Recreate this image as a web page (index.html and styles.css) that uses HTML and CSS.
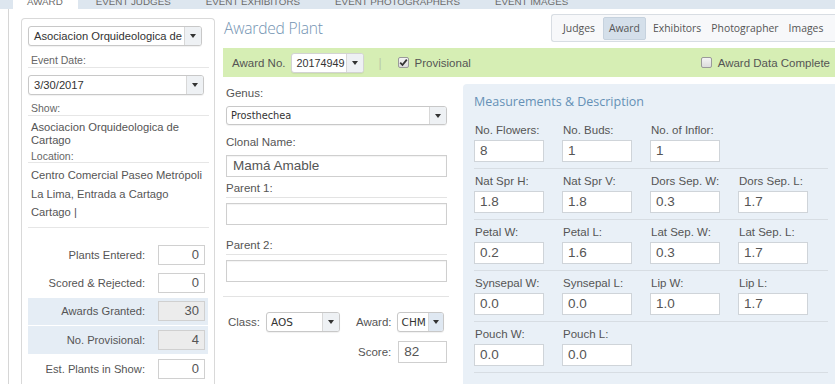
FILE: index.html
```html
<!DOCTYPE html>
<html>
<head>
<meta charset="utf-8">
<link rel="stylesheet" href="styles.css">
</head>
<body>
<div class="topnav">
  <div class="tab active">AWARD</div>
  <div class="tab">EVENT JUDGES</div>
  <div class="tab">EVENT EXHIBITORS</div>
  <div class="tab">EVENT PHOTOGRAPHERS</div>
  <div class="tab">EVENT IMAGES</div>
</div>
<div class="frame">
  <aside class="card">
    <div class="sel sel-show"><span class="val">Asociacion Orquideologica de</span><span class="btn"><i class="tri"></i></span></div>
    <div class="clabel lbl-date">Event Date:</div>
    <div class="sel sel-date"><span class="val">3/30/2017</span><span class="btn"><i class="tri"></i></span></div>
    <div class="clabel lbl-show">Show:</div>
    <div class="showtext">Asociacion Orquideologica de<br>Cartago</div>
    <div class="clabel lbl-loc">Location:</div>
    <div class="loctext">
      <div>Centro Comercial Paseo Metrópoli</div>
      <div>La Lima, Entrada a Cartago</div>
      <div>Cartago |</div>
    </div>
    <div class="divider"></div>
    <div class="stats">
      <div class="srow"><span class="slabel">Plants Entered:</span><span class="sinput">0</span></div>
      <div class="srow"><span class="slabel">Scored &amp; Rejected:</span><span class="sinput">0</span></div>
      <div class="srow hl"><span class="slabel">Awards Granted:</span><span class="sinput ro">30</span></div>
      <div class="srow hl"><span class="slabel">No. Provisional:</span><span class="sinput ro">4</span></div>
      <div class="srow"><span class="slabel">Est. Plants in Show:</span><span class="sinput">0</span></div>
    </div>
  </aside>
  <main class="main">
    <div class="head">
      <h1 class="title">Awarded Plant</h1>
      <nav class="subtabs">
        <span class="stab">Judges</span>
        <span class="stab on">Award</span>
        <span class="stab">Exhibitors</span>
        <span class="stab">Photographer</span>
        <span class="stab">Images</span>
      </nav>
    </div>
    <div class="greenbar">
      <span class="gl">Award No.</span>
      <div class="sel sel-award"><span class="val">20174949</span><span class="btn"><i class="tri"></i></span></div>
      <span class="pipe">|</span>
      <span class="cb checked"><svg width="9" height="9" viewBox="0 0 9 9"><path d="M1.2 4.6 L3.5 7 L7.8 1.6" fill="none" stroke="#333" stroke-width="1.8"/></svg></span>
      <span class="gl">Provisional</span>
      <span class="spacer"></span>
      <span class="cb"></span>
      <span class="gl">Award Data Complete</span>
    </div>
    <div class="body">
      <div class="form">
        <div class="flabel lbl-genus">Genus:</div>
        <div class="sel sel-genus"><span class="val">Prosthechea</span><span class="btn"><i class="tri"></i></span></div>
        <div class="flabel lbl-clonal">Clonal Name:</div>
        <div class="finput big">Mamá Amable</div>
        <div class="flabel uline lbl-p1">Parent 1:</div>
        <div class="finput"></div>
        <div class="flabel uline lbl-p2">Parent 2:</div>
        <div class="finput"></div>
        <div class="fsep"></div>
        <div class="classrow">
          <span class="flab">Class:</span>
          <div class="sel sel-class"><span class="val">AOS</span><span class="btn"><i class="tri"></i></span></div>
          <span class="flab lab-award">Award:</span>
          <div class="sel sel-aw"><span class="val">CHM</span><span class="btn blue"><i class="tri"></i></span></div>
        </div>
        <div class="scorerow">
          <span class="flab">Score:</span>
          <div class="scorebox">82</div>
        </div>
      </div>
      <section class="measure">
        <h2 class="mtitle">Measurements &amp; Description</h2>
        <div class="mrow">
          <div class="cell"><div class="ml">No. Flowers:</div><div class="mi">8</div></div>
          <div class="cell"><div class="ml">No. Buds:</div><div class="mi">1</div></div>
          <div class="cell"><div class="ml">No. of Inflor:</div><div class="mi">1</div></div>
        </div>
        <div class="mrow">
          <div class="cell"><div class="ml">Nat Spr H:</div><div class="mi">1.8</div></div>
          <div class="cell"><div class="ml">Nat Spr V:</div><div class="mi">1.8</div></div>
          <div class="cell"><div class="ml">Dors Sep. W:</div><div class="mi">0.3</div></div>
          <div class="cell"><div class="ml">Dors Sep. L:</div><div class="mi">1.7</div></div>
        </div>
        <div class="mrow">
          <div class="cell"><div class="ml">Petal W:</div><div class="mi">0.2</div></div>
          <div class="cell"><div class="ml">Petal L:</div><div class="mi">1.6</div></div>
          <div class="cell"><div class="ml">Lat Sep. W:</div><div class="mi">0.3</div></div>
          <div class="cell"><div class="ml">Lat Sep. L:</div><div class="mi">1.7</div></div>
        </div>
        <div class="mrow">
          <div class="cell"><div class="ml">Synsepal W:</div><div class="mi">0.0</div></div>
          <div class="cell"><div class="ml">Synsepal L:</div><div class="mi">0.0</div></div>
          <div class="cell"><div class="ml">Lip W:</div><div class="mi">1.0</div></div>
          <div class="cell"><div class="ml">Lip L:</div><div class="mi">1.7</div></div>
        </div>
        <div class="mrow">
          <div class="cell"><div class="ml">Pouch W:</div><div class="mi">0.0</div></div>
          <div class="cell"><div class="ml">Pouch L:</div><div class="mi">0.0</div></div>
        </div>
      </section>
    </div>
  </main>
</div>
</body>
</html>
```
FILE: styles.css
```css
html, body {
  margin: 0;
  padding: 0;
}
body {
  width: 835px;
  height: 384px;
  overflow: hidden;
  background: #fff;
  font-family: "Liberation Sans", Arial, sans-serif;
  font-size: 11.5px;
  color: #555;
}

/* top nav */
.topnav {
  height: 9px;
  background: #dde6ef;
  display: flex;
  padding-left: 13px;
  overflow: hidden;
}
.tab {
  padding: 0 17px 0 18px;
  font-size: 9.8px;
  line-height: 11px;
  margin-top: -4px;
  height: 14px;
  color: #6b6b6b;
}
.tab.active {
  background: #fff;
  padding: 0 15px 0 14px;
}

/* frame */
.frame {
  margin-left: 8px;
  border-left: 1px solid #d6d6d6;
  padding-left: 12px;
  display: flex;
  gap: 8px;
  height: 375px;
}

/* left card */
.card {
  width: 181px;
  margin-top: 9px;
  border: 1px solid #d9d9d9;
  border-bottom: none;
  border-radius: 4px 4px 0 0;
  padding: 7px 5px 0 6px;
  display: flex;
  flex-direction: column;
  flex-shrink: 0;
}

/* select widget */
.sel {
  display: flex;
  height: 20px;
  box-sizing: border-box;
  border: 1px solid #c8c8c8;
  border-radius: 3px;
  background: #fff;
  color: #333;
  font-size: 11.2px;
  box-shadow: 0 1px 1px rgba(0,0,0,0.06);
}
.sel .val {
  flex: 1;
  padding-left: 5px;
  line-height: 18px;
  white-space: nowrap;
  overflow: hidden;
}
.sel .btn {
  width: 16px;
  border-left: 1px solid #d8d8d8;
  background: #eef1f4;
  display: flex;
  align-items: center;
  justify-content: center;
  border-radius: 0 2px 2px 0;
}
.sel .btn.blue {
  background: #dfe8f2;
}
.tri {
  width: 0;
  height: 0;
  border-top: 4px solid #333;
  border-left: 3px solid transparent;
  border-right: 3px solid transparent;
}
.sel-show {
  width: 174px;
}
.sel-date {
  width: 176px;
}

.clabel {
  font-size: 10.5px;
  color: #666;
  line-height: 13px;
  border-bottom: 1px solid #e6e6e6;
  padding-left: 3px;
}
.lbl-date { margin-top: 8px; margin-bottom: 7px; }
.lbl-show { margin-top: 7px; }
.lbl-loc { margin-top: 3px; line-height: 12px; }
.showtext {
  margin-top: 5px;
  padding-left: 3px;
  font-size: 11.2px;
  line-height: 13px;
  color: #555;
}
.loctext {
  margin-top: 3px;
  padding-left: 3px;
  font-size: 11.2px;
  line-height: 18.5px;
  color: #555;
}
.divider {
  margin-top: 5px;
  border-bottom: 1px solid #e6e6e6;
}
.stats {
  margin-top: 13px;
  display: flex;
  flex-direction: column;
}
.srow {
  height: 28.5px;
  display: flex;
  align-items: center;
  width: 180px;
}
.srow.hl {
  background: #e5edf5;
  border-bottom: 1px solid #fff;
  box-sizing: border-box;
}
.slabel {
  width: 117px;
  text-align: right;
  font-size: 11.2px;
  color: #555;
}
.sinput {
  margin-left: 13px;
  width: 47px;
  height: 20px;
  box-sizing: border-box;
  border: 1px solid #d0d0d0;
  background: #fff;
  text-align: right;
  padding-right: 5px;
  line-height: 18px;
  font-size: 13px;
  color: #555;
}
.sinput.ro {
  background: #ececec;
}

/* main */
.main {
  flex: 1;
  display: flex;
  flex-direction: column;
  min-width: 0;
}
.head {
  height: 39px;
  display: flex;
  align-items: flex-start;
  justify-content: space-between;
}
.title {
  margin: 8px 0 0 1px;
  font-family: "Open Sans", "Liberation Sans", sans-serif;
  font-weight: 300;
  font-size: 15.6px;
  letter-spacing: -0.2px;
  line-height: 22px;
  color: #7393b2;
}
.subtabs {
  margin-top: 5px;
  height: 28px;
  box-sizing: border-box;
  border: 1px solid #d8dde3;
  border-right: none;
  border-radius: 3px 0 0 3px;
  background: #f7f8fa;
  display: flex;
  align-items: center;
  padding-left: 6px;
  width: 284px;
  overflow: hidden;
}
.stab {
  font-family: "Open Sans", "Liberation Sans", sans-serif;
  font-size: 10.4px;
  color: #555;
  padding: 0 5px;
  line-height: 22px;
  height: 23px;
  box-sizing: border-box;
  white-space: nowrap;
}
.stab.on {
  background: #d4dfea;
  border: 1px solid #c6d2de;
  border-radius: 2px;
  line-height: 21px;
  padding: 0 5px;
  margin: 0 2px 0 3px;
}

/* green bar */
.greenbar {
  height: 29px;
  background: #d6eeb4;
  display: flex;
  align-items: center;
  padding-left: 9px;
  padding-right: 5px;
}
.gl {
  font-size: 11.5px;
  color: #555;
}
.sel-award {
  margin-left: 6px;
  width: 73px;
  border-color: #d3d3d3;
}
.sel-award .val {
  padding-left: 4px;
  font-size: 10.8px;
  overflow: visible;
}
.pipe {
  margin: 0 16px 0 14px;
  color: #b9c9a8;
  font-size: 12px;
}
.cb {
  width: 11px;
  height: 11px;
  box-sizing: border-box;
  border: 1px solid #9a9a9a;
  border-radius: 2px;
  background: linear-gradient(#f4f4f4, #dcdcdc);
  margin-right: 6px;
  display: inline-flex;
  align-items: center;
  justify-content: center;
}
.spacer {
  flex: 1;
}

/* body */
.body {
  flex: 1;
  display: flex;
  margin-top: 7px;
}
.form {
  width: 240px;
  flex-shrink: 0;
  padding-left: 3px;
  box-sizing: border-box;
  display: flex;
  flex-direction: column;
}
.flabel {
  font-size: 11.5px;
  line-height: 14px;
  color: #555;
  width: 221px;
}
.flabel.uline {
  border-bottom: 1px solid #e3e3e3;
  padding-bottom: 2px;
}
.lbl-genus { margin-top: 2px; margin-bottom: 6px; }
.lbl-clonal { margin-top: 10px; margin-bottom: 6px; }
.lbl-p1 { margin-top: 4px; margin-bottom: 5px; }
.lbl-p2 { margin-top: 13px; margin-bottom: 5px; }
.sel-genus {
  width: 221px;
  height: 19px;
}
.sel-genus .val {
  line-height: 17px;
  font-family: "DejaVu Sans", sans-serif;
  font-size: 9.8px;
  padding-left: 4px;
}
.finput {
  width: 221px;
  height: 22px;
  box-sizing: border-box;
  border: 1px solid #cfcfcf;
  background: #fff;
  box-shadow: inset 0 1px 1px rgba(0,0,0,0.05);
}
.finput.big {
  font-size: 13.5px;
  line-height: 20px;
  padding-left: 6px;
  color: #555;
}
.fsep {
  margin: 14px 0 0 -3px;
  width: 226px;
  border-bottom: 1px solid #e3e3e3;
}
.classrow {
  margin-top: 15px;
  display: flex;
  align-items: center;
  height: 20px;
}
.flab {
  font-size: 11.5px;
  color: #555;
}
.classrow .flab:first-child {
  margin-left: 2px;
}
.sel-class {
  margin-left: 6px;
  width: 74px;
}
.sel-class .val, .sel-aw .val {
  font-family: "DejaVu Sans", sans-serif;
  font-size: 10.5px;
  padding-left: 4px;
}
.lab-award {
  margin-left: 16px;
}
.sel-aw {
  margin-left: 5px;
  width: 47px;
}
.sel-aw .btn {
  width: 14px;
}
.scorerow {
  margin-top: 9px;
  display: flex;
  align-items: center;
  padding-left: 132px;
}
.scorebox {
  margin-left: 7px;
  width: 49px;
  height: 22px;
  box-sizing: border-box;
  border: 1px solid #cfcfcf;
  background: #fff;
  font-size: 13.5px;
  line-height: 20px;
  padding-left: 5px;
  color: #555;
}

/* measurements */
.measure {
  flex: 1;
  background: #e9f0f7;
  border-radius: 4px 0 0 0;
  padding: 10px 0 0 11px;
}
.mtitle {
  margin: 0 0 8px;
  font-family: "Open Sans", "Liberation Sans", sans-serif;
  font-weight: 400;
  font-size: 12.5px;
  line-height: 16px;
  color: #6590b6;
}
.mrow {
  display: grid;
  grid-template-columns: repeat(4, 88px);
  width: 354px;
  padding: 5px 0 6px;
  border-bottom: 1px solid #d7dde3;
}
.ml {
  font-size: 11.5px;
  line-height: 14px;
  color: #555;
  margin-left: 1px;
}
.mi {
  margin-top: 3px;
  width: 70px;
  height: 22px;
  box-sizing: border-box;
  border: 1px solid #cfd4d9;
  background: #fff;
  font-size: 13.5px;
  line-height: 20px;
  padding-left: 5px;
  color: #555;
}
```
